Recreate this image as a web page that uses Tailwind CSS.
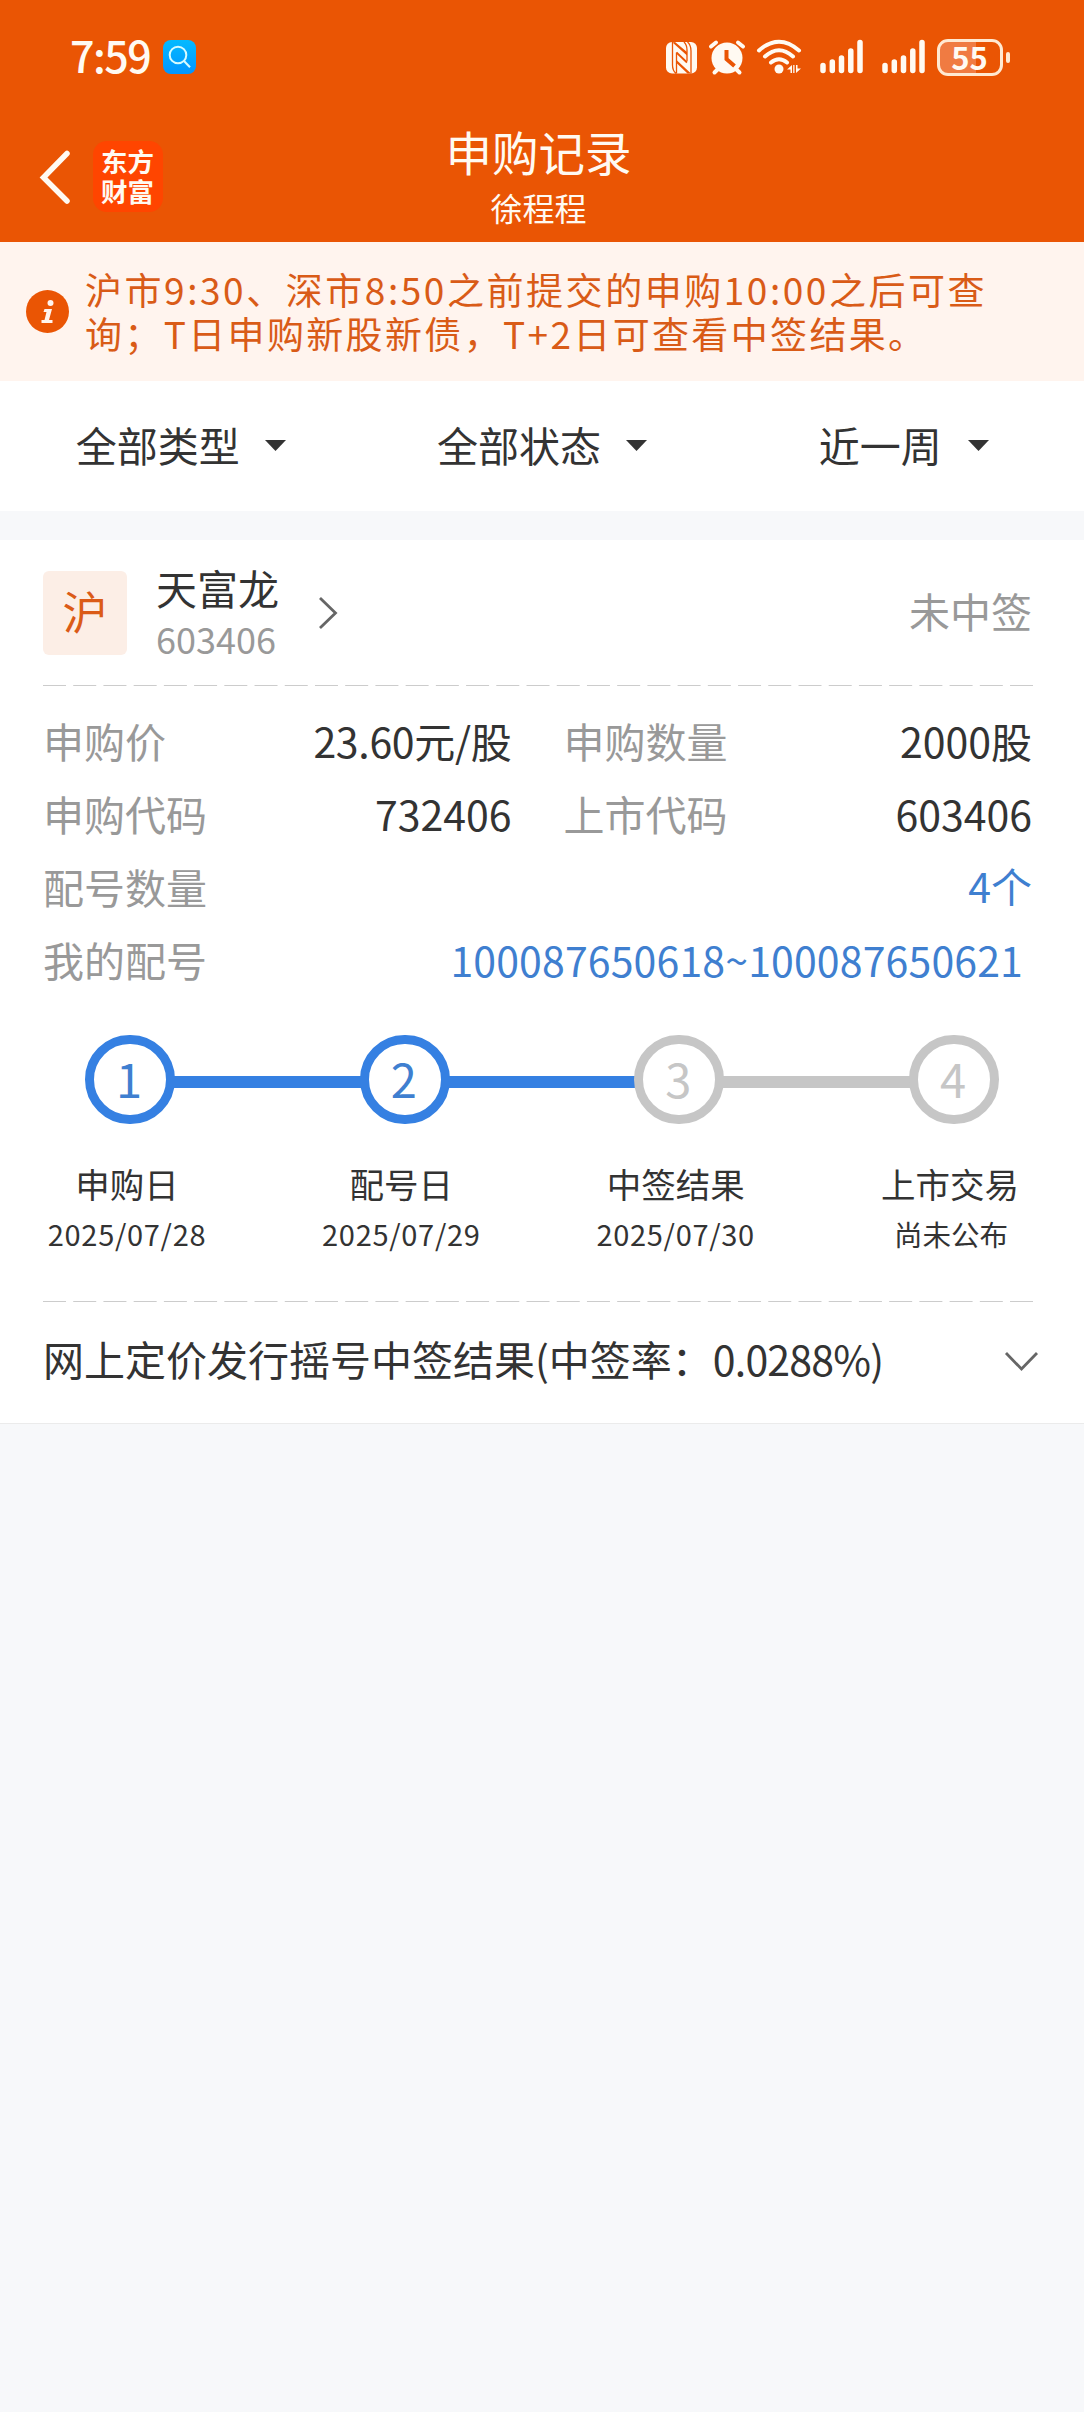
<!DOCTYPE html>
<html lang="zh-CN">
<head>
    <meta charset="UTF-8">
    <meta name="viewport" content="width=device-width, initial-scale=1.0">
    <title>申购记录</title>
    <script src="https://cdn.jsdelivr.net/npm/@tailwindcss/browser@4"></script>
</head>
<body class="bg-[#f7f8fa] font-['Noto_Sans_CJK_SC',sans-serif] text-[#333] text-[41px]">
    <div class="w-[1084px] min-h-[2412px]">
        <!-- 顶部 -->
        <header class="h-[242px] bg-[#ea5504] text-[#fffaf2]">
            <!-- 状态栏 -->
            <div class="h-[114px] pl-[70px] pr-[73px] flex items-center justify-between">
                <div class="flex items-center gap-[13px]">
                    <span class="w-[80px] pb-[6px] text-[43px] leading-[50px] font-medium tracking-[-1.500px] whitespace-nowrap">7:59</span>
                    <svg class="w-[33px] h-[34px]" viewBox="0 0 33 34" fill="none">
                        <defs>
                            <linearGradient id="search-bg" x1="0" y1="0" x2="0" y2="1">
                                <stop offset="0" stop-color="#04baff"/>
                                <stop offset="1" stop-color="#0295ff"/>
                            </linearGradient>
                        </defs>
                        <rect width="33" height="34" rx="8" fill="url(#search-bg)"/>
                        <circle cx="15" cy="15" r="8.3" stroke="#d8fbff" stroke-width="2"/>
                        <path d="M21 21l6 6.3" stroke="#d8fbff" stroke-width="2"/>
                    </svg>
                </div>
                <div class="flex items-center">
                    <svg class="w-[270px] h-[38px]" viewBox="666 37 270 38" fill="none" stroke-linecap="round">
                        <!-- NFC -->
                        <rect x="666" y="41" width="31" height="31.500" rx="6" fill="#fffaf2"/>
                        <path d="M672.500 41v23q0 5.500 3.500 8.500M676.500 72.500V51.500M687 60V49q0-5-3-8M687.500 41q3.500 3 3.500 9v22.500" stroke="#ea5504" stroke-width="1.300" stroke-linecap="butt"/>
                        <path d="M672.500 41.500L687 54.500v-3.500L675 41zM676.500 59L691 72.500h-3.500L676.500 62z" fill="#ea5504"/>
                        <path d="M676.500 51.500l10.500 10" stroke="#ea5504" stroke-width="1.800" stroke-linecap="butt"/>
                        <!-- 闹钟 -->
                        <circle cx="727" cy="57" r="15.500" fill="#fffaf2"/>
                        <path d="M711 45.500l5-4M743 45.500l-5-4M718 68l-3.500 3.500M736 68l3.500 3.500" stroke="#fffaf2" stroke-width="4"/>
                        <path d="M726.500 49v9l8 7" stroke="#ea5504" stroke-width="4" stroke-linecap="butt"/>
                        <!-- WiFi -->
                        <g stroke="#fffaf2" stroke-width="4">
                            <path d="M759 49.500q20-17.500 40 0M765 55.500q14-12.500 28 0M771 61.500q8-6.500 16 0"/>
                        </g>
                        <circle cx="779" cy="68" r="4.500" fill="#fffaf2"/>
                        <path d="M787 68.500l5-4.500v8h-1.500v-3.500zM801 67.500l-5 4.500v-8h1.500v3.500zM793.200 64h1.300v8h-1.300z" fill="#fffaf2"/>
                        <!-- 信号 -->
                        <g stroke="#fffaf2" stroke-width="5.500">
                            <path d="M823 64.500v5M832.300 61v8.500M841.500 57v12.500M850.800 50v19.500M860 41.500v28"/>
                            <path d="M885 64.500v5M894.300 61v8.500M903.500 57v12.500M912.800 50v19.500M922 41.500v28"/>
                        </g>
                    </svg>
                    <!-- 电池 -->
                    <div class="ml-[1px] w-[66px] h-[37px] rounded-[11px] border-[3px] border-[#ffe9d2] bg-linear-to-r from-[#f07b42] from-[60%] to-[#ea5504] to-[60%] flex items-center justify-center pb-[1px] pr-[1px] text-[31px] leading-[46px] font-bold">55</div>
                    <div class="ml-[3px] mr-[1px] w-[4px] h-[11px] rounded-full bg-[#ffe9d2]"></div>
                </div>
            </div>
            <!-- 导航栏 -->
            <div class="h-[128px] grid grid-cols-[1fr_auto_1fr] items-start">
                <div class="pl-[39px] pt-[27px] flex items-center gap-[23px]">
                    <svg class="w-[31px] h-[54px]" viewBox="0 0 31 54" fill="none">
                        <path d="M28 3.500L4.500 27.500L28 51" stroke="#fffaf2" stroke-width="5.500" stroke-linecap="round"/>
                    </svg>
                    <div class="w-[70px] h-[71px] rounded-[14px] bg-[#ff4500] flex flex-col items-center justify-center font-bold text-[26.500px] leading-[30px] pb-[2px] pr-[1px]">
                        <span>东方</span>
                        <span>财富</span>
                    </div>
                </div>
                <div class="flex flex-col items-center pr-[7px]">
                    <h1 class="text-[46.500px] leading-[74px] h-[73px]">申购记录</h1>
                    <span class="text-[32px] leading-[40px]">徐程程</span>
                </div>
            </div>
        </header>

        <!-- 提示 -->
        <div class="h-[139px] bg-[#fff4ee] pl-[26px] flex items-start text-[#d95b17]">
            <svg class="w-[43px] h-[43px] mt-[48px]" viewBox="0 0 43 43">
                <circle cx="21.500" cy="21.500" r="21.500" fill="#ea5504"/>
                <circle cx="24.500" cy="13" r="3" fill="#fff4ee"/>
                <path d="M18.500 19h7.500l-3 11h3.500v3h-11v-3h3l2-8h-3z" fill="#fff4ee"/>
            </svg>
            <p class="ml-[16px] mt-[25px] text-[37px] leading-[44px] whitespace-nowrap"><span class="tracking-[2.550px]">沪市9:30、深市8:50之前提交的申购10:00之后可查</span><br><span class="tracking-[2.350px]">询；T日申购新股新债，T+2日可查看中签结果。</span></p>
        </div>

        <!-- 筛选 -->
        <div class="h-[130px] bg-white grid grid-cols-3 pb-[2px] leading-[60px]">
            <div class="flex items-center justify-center gap-[25px]">
                <span class="pb-[2px]">全部类型</span>
                <svg class="w-[21px] h-[11px]" viewBox="0 0 21 11"><path d="M0 0h21L10.500 11z" fill="#333"/></svg>
            </div>
            <div class="flex items-center justify-center gap-[25px]">
                <span class="pb-[2px]">全部状态</span>
                <svg class="w-[21px] h-[11px]" viewBox="0 0 21 11"><path d="M0 0h21L10.500 11z" fill="#333"/></svg>
            </div>
            <div class="flex items-center justify-center gap-[26px] pl-[1px]">
                <span class="pb-[2px]">近一周</span>
                <svg class="w-[21px] h-[11px]" viewBox="0 0 21 11"><path d="M0 0h21L10.500 11z" fill="#333"/></svg>
            </div>
        </div>

        <!-- 申购卡片 -->
        <section class="mt-[29px] h-[884px] bg-white border-b border-[#ebebeb] pl-[43px]">
            <div class="h-[145px] pr-[52px] flex items-start">
                <div class="mt-[31px] w-[84px] h-[84px] rounded-[6px] bg-[#fceee6] text-[#db5b17] text-[45px] leading-[80px] text-center">沪</div>
                <div class="ml-[29px] mt-[19px] flex flex-col">
                    <span class="leading-[56px]">天富龙</span>
                    <span class="text-[36px] leading-[47px] text-[#999]">603406</span>
                </div>
                <svg class="ml-[39px] mt-[56px] w-[20px] h-[34px]" viewBox="0 0 20 34" fill="none">
                    <path d="M2 2l15.500 15L2 32" stroke="#666" stroke-width="2.800"/>
                </svg>
                <span class="ml-auto mt-[40px] leading-[60px] text-[#999]">未中签</span>
            </div>
            <svg class="block w-[990px] h-[1px]" viewBox="0 0 990 1"><path d="M0 .5h990" stroke="#ccc" stroke-dasharray="23 7.220"/></svg>

            <div class="pt-[18px] pr-[52px] leading-[73px]">
                <div class="grid grid-cols-2 gap-x-[52px]">
                    <div class="flex justify-between"><span class="text-[#999]">申购价</span><span class="tracking-[-0.300px]">23.60元/股</span></div>
                    <div class="flex justify-between"><span class="text-[#999]">申购数量</span><span>2000股</span></div>
                    <div class="flex justify-between"><span class="text-[#999]">申购代码</span><span>732406</span></div>
                    <div class="flex justify-between"><span class="text-[#999]">上市代码</span><span>603406</span></div>
                </div>
                <div class="flex justify-between"><span class="text-[#999]">配号数量</span><span class="h-[73px] leading-[71px] text-[#3f7fd0]">4个</span></div>
                <div class="flex justify-between"><span class="text-[#999]">我的配号</span><span class="pr-[9px] tracking-[0.150px] text-[#3f7fd0]">100087650618~100087650621</span></div>
            </div>

            <!-- 进度 -->
            <div class="mt-[39px] ml-[42px] w-[914px] h-[89px] flex items-center text-[47px] leading-[67px] text-center">
                <div class="w-[90px] h-[89px] shrink-0 rounded-full border-[9px] border-[#3580e2] text-[#3f7fd0] pr-[2px]">1</div>
                <div class="-mx-[1px] mt-[5px] h-[12px] grow bg-[#3580e2]"></div>
                <div class="w-[90px] h-[89px] shrink-0 rounded-full border-[9px] border-[#3580e2] text-[#3f7fd0] pr-[2px]">2</div>
                <div class="-mx-[1px] mt-[5px] h-[12px] grow bg-[#3580e2]"></div>
                <div class="w-[90px] h-[89px] shrink-0 rounded-full border-[9px] border-[#c6c6c6] text-[#c6c6c6] pr-[2px]">3</div>
                <div class="-mx-[1px] mt-[5px] h-[12px] grow bg-[#c6c6c6]"></div>
                <div class="w-[90px] h-[89px] shrink-0 rounded-full border-[9px] border-[#c6c6c6] text-[#c6c6c6] pr-[2px]">4</div>
            </div>
            <div class="mt-[33px] ml-[4px] w-[983px] h-[144px] flex justify-between text-center">
                <div class="w-[160px]">
                    <div class="text-[34.500px] leading-[52px]">申购日</div>
                    <div class="text-[29px] leading-[49px] tracking-[0.700px] whitespace-nowrap">2025/07/28</div>
                </div>
                <div class="w-[160px]">
                    <div class="text-[34.500px] leading-[52px]">配号日</div>
                    <div class="text-[29px] leading-[49px] tracking-[0.700px] whitespace-nowrap">2025/07/29</div>
                </div>
                <div class="w-[160px]">
                    <div class="text-[34.500px] leading-[52px]">中签结果</div>
                    <div class="text-[29px] leading-[49px] tracking-[0.700px] whitespace-nowrap">2025/07/30</div>
                </div>
                <div class="w-[160px]">
                    <div class="text-[34.500px] leading-[52px]">上市交易</div>
                    <div class="text-[28.500px] leading-[49px] pl-[2px]">尚未公布</div>
                </div>
            </div>
            <svg class="block w-[990px] h-[1px]" viewBox="0 0 990 1"><path d="M0 .5h990" stroke="#ccc" stroke-dasharray="23 7.220"/></svg>

            <div class="h-[116px] pr-[45px] flex items-center justify-between">
                <span class="pb-[5px] leading-[60px] whitespace-nowrap">网上定价发行摇号中签结果(中签率：<span class="tracking-[-0.800px]">0.0288%)</span></span>
                <svg class="w-[35px] h-[21px] mt-[2px]" viewBox="0 0 35 21" fill="none">
                    <path d="M2 2l15.500 16L33 2" stroke="#666" stroke-width="2.800"/>
                </svg>
            </div>
        </section>
    </div>
</body>
</html>
